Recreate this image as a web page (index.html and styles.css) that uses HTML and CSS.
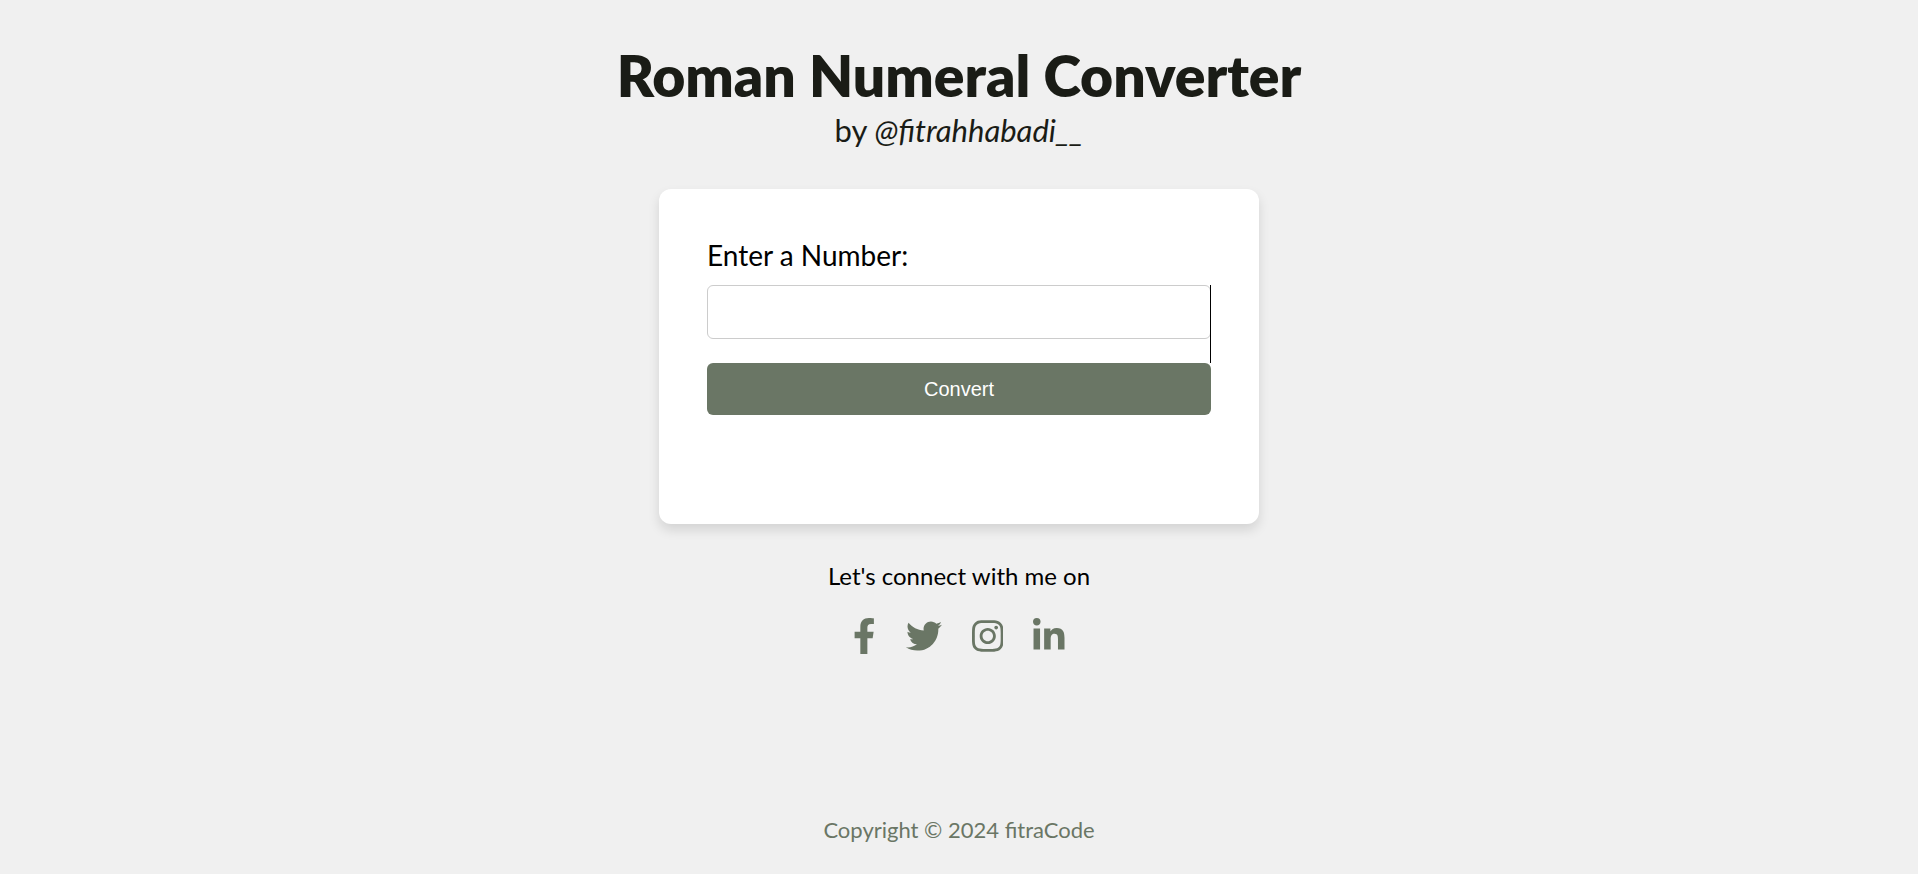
FILE: index.html
```html
<!DOCTYPE html>
<html lang="en">
<head>
<meta charset="utf-8">
<meta name="viewport" content="width=device-width, initial-scale=1">
<title>Roman Numeral Converter</title>
<link rel="stylesheet" href="styles.css">
</head>
<body>
<header class="header">
  <h1 class="title">Roman Numeral Converter</h1>
  <p class="author">by <em>@fitrahhabadi__</em></p>
</header>
<main class="main">
  <form class="card">
    <label class="label" for="number">Enter a Number:</label>
    <div class="field"><input class="input" type="number" id="number"></div>
    <button class="button" type="button">Convert</button>
  </form>
  <p class="connect">Let's connect with me on</p>
  <nav class="social" aria-label="Social links">
    <a href="#" aria-label="Facebook"><svg class="icon" viewBox="0 0 320 512"><path d="M279.14 288l14.22-92.66h-88.91v-60.13c0-25.35 12.42-50.06 52.24-50.06h40.42V6.26S260.43 0 225.36 0c-73.22 0-121.08 44.38-121.08 124.72v70.62H22.89V288h81.39v224h100.17V288z"/></svg></a>
    <a href="#" aria-label="Twitter"><svg class="icon" viewBox="0 0 512 512"><path d="M459.37 151.716c.325 4.548.325 9.097.325 13.645 0 138.72-105.583 298.558-298.558 298.558-59.452 0-114.68-17.219-161.137-47.106 8.447.974 16.568 1.299 25.34 1.299 49.055 0 94.213-16.568 130.274-44.832-46.132-.975-84.792-31.188-98.112-72.772 6.498.974 12.995 1.624 19.818 1.624 9.421 0 18.843-1.3 27.614-3.573-48.081-9.747-84.143-51.98-84.143-102.985v-1.299c13.969 7.797 30.214 12.67 47.431 13.319-28.264-18.843-46.781-51.005-46.781-87.391 0-19.492 5.197-37.36 14.294-52.954 51.655 63.675 129.3 105.258 216.365 109.807-1.624-7.797-2.599-15.918-2.599-24.04 0-57.828 46.782-104.934 104.934-104.934 30.213 0 57.502 12.67 76.67 33.137 23.715-4.548 46.456-13.32 66.599-25.34-7.798 24.366-24.366 44.833-46.132 57.827 21.117-2.273 41.584-8.122 60.426-16.243-14.292 20.791-32.161 39.308-52.628 54.253z"/></svg></a>
    <a href="#" aria-label="Instagram"><svg class="icon" viewBox="0 0 448 512"><path d="M224.1 141c-63.6 0-114.9 51.3-114.9 114.9s51.3 114.9 114.9 114.9S339 319.5 339 255.9 287.7 141 224.1 141zm0 189.6c-41.1 0-74.7-33.5-74.7-74.7s33.5-74.7 74.7-74.7 74.7 33.5 74.7 74.7-33.6 74.7-74.7 74.7zm146.4-194.3c0 14.9-12 26.8-26.8 26.8-14.9 0-26.8-12-26.8-26.8s12-26.8 26.8-26.8 26.8 12 26.8 26.8zm76.1 27.2c-1.7-35.9-9.9-67.7-36.2-93.9-26.2-26.2-58-34.4-93.9-36.2-37-2.1-147.9-2.1-184.9 0-35.8 1.7-67.6 9.9-93.9 36.1s-34.4 58-36.2 93.9c-2.1 37-2.1 147.9 0 184.9 1.7 35.9 9.9 67.7 36.2 93.9s58 34.4 93.9 36.2c37 2.1 147.9 2.1 184.9 0 35.9-1.7 67.7-9.9 93.9-36.2 26.2-26.2 34.4-58 36.2-93.9 2.1-37 2.1-147.8 0-184.8zM398.8 388c-7.8 19.6-22.9 34.7-42.6 42.6-29.5 11.7-99.5 9-132.1 9s-102.7 2.6-132.1-9c-19.6-7.8-34.7-22.9-42.6-42.6-11.7-29.5-9-99.5-9-132.1s-2.6-102.7 9-132.1c7.8-19.6 22.9-34.7 42.6-42.6 29.5-11.7 99.5-9 132.1-9s102.7-2.6 132.1 9c19.6 7.8 34.7 22.9 42.6 42.6 11.7 29.5 9 99.5 9 132.1s2.7 102.7-9 132.1z"/></svg></a>
    <a href="#" aria-label="LinkedIn"><svg class="icon" viewBox="0 0 448 512"><path d="M100.28 448H7.4V148.9h92.88zM53.79 108.1C24.09 108.1 0 83.5 0 53.8a53.79 53.79 0 0 1 107.58 0c0 29.7-24.1 54.3-53.79 54.3zM447.9 448h-92.68V302.4c0-34.7-.7-79.2-48.29-79.2-48.29 0-55.69 37.7-55.69 76.7V448h-92.78V148.9h89.08v40.8h1.3c12.4-23.5 42.69-48.3 87.88-48.3 94 0 111.28 61.9 111.28 142.3V448z"/></svg></a>
  </nav>
</main>
<footer class="footer">Copyright © 2024 fitraCode</footer>
</body>
</html>
```
FILE: styles.css
```css
* { box-sizing: border-box; }

body {
  margin: 0;
  min-height: 100vh;
  padding: 40px 24px 24px;
  display: flex;
  flex-direction: column;
  align-items: center;
  background: #f0f0f0;
  color: #000;
  font-family: Lato, "Noto Sans", sans-serif;
}

.header {
  text-align: center;
  color: #1a1c16;
}

.title {
  margin: 0;
  font-size: 57px;
  line-height: 70px;
  font-weight: 800;
}

.author {
  margin: 0;
  font-size: 31px;
  line-height: 40px;
}

.main {
  width: 100%;
  max-width: 600px;
  margin-top: 39px;
  display: flex;
  flex-direction: column;
  align-items: center;
}

.card {
  width: 100%;
  padding: 48px 48px 109px;
  background: #fff;
  border-radius: 12px;
  box-shadow: 0 6px 12px rgba(0, 0, 0, 0.12);
}

.label {
  display: block;
  margin-bottom: 12px;
  font-size: 28px;
  line-height: 36px;
}

.field {
  position: relative;
  padding-bottom: 24px;
}

.field::after {
  content: "";
  position: absolute;
  top: 0;
  right: 0;
  bottom: 0;
  width: 1px;
  background: #000;
}

.input {
  display: block;
  width: 100%;
  height: 54px;
  padding: 12px;
  border: 1px solid #ccc;
  border-radius: 6px;
  background: #fff;
  font: 20px "Liberation Sans", Arial, sans-serif;
  appearance: textfield;
}

.button {
  display: block;
  width: 100%;
  height: 52px;
  border: 0;
  border-radius: 6px;
  background: #6a7665;
  color: #fff;
  font: 20px "Liberation Sans", Arial, sans-serif;
}

.connect {
  margin: 36px 0 0;
  font-size: 24px;
  line-height: 32px;
}

.social {
  margin-top: 26px;
  display: flex;
  gap: 30px;
}

.social a {
  display: block;
  color: #6a7665;
}

.icon {
  display: block;
  height: 36px;
  fill: currentColor;
}

.footer {
  margin-top: auto;
  color: #6a7665;
  font-size: 22px;
  line-height: 40px;
}
```
